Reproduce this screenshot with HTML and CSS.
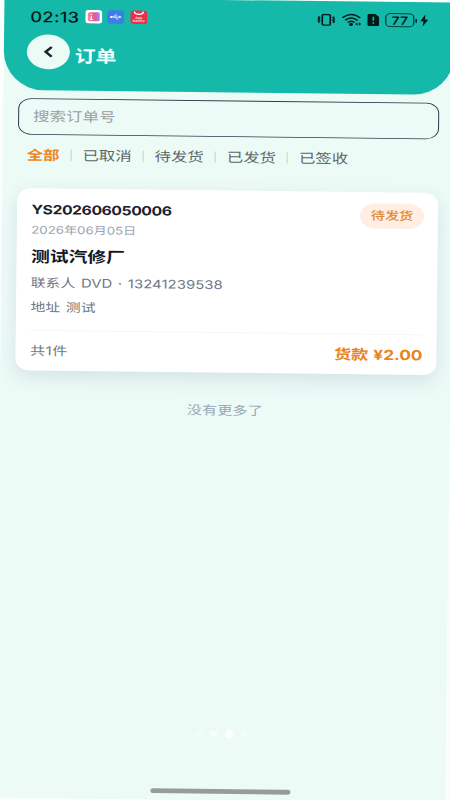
FILE: index.html
```html
<!DOCTYPE html>
<html lang="zh-CN">
<head>
<meta charset="utf-8">
<title>订单</title>
<link rel="stylesheet" href="styles.css">
</head>
<body>
<div class="screen">
  <header class="header">
    <div class="status">
      <span class="time">02:13</span>
      <div class="apps">
        <svg width="17" height="17" viewBox="0 0 17 17"><defs><linearGradient id="g"><stop offset="0" stop-color="#f58d9c"/><stop offset=".55" stop-color="#dd5c9c"/><stop offset="1" stop-color="#9a86ea"/></linearGradient></defs><rect width="17" height="17" rx="4" fill="#fff"/><rect x="2.500" y="3" width="12" height="11" rx="2" fill="url(#g)"/><path d="M6 5v1.500M6 8v4M4.800 12h2.600" stroke="#fff" stroke-width="1.200"/></svg>
        <svg width="17" height="17" viewBox="0 0 17 17"><rect width="17" height="17" rx="4" fill="#3c7de6"/><path d="M3.500 8.500H13M6 8.500l2-2.400h2M7.500 8.500l2 2.400h1.500" fill="none" stroke="#fff" stroke-width=".9"/><circle cx="4" cy="8.500" r="1.300" fill="#fff"/><path d="M12 7l2.400 1.500L12 10z" fill="#fff"/></svg>
        <svg width="17" height="17" viewBox="0 0 17 17"><rect width="17" height="17" rx="4" fill="#e7304b"/><path d="M4 1.500c.4 4.600 8.600 4.600 9 0" fill="none" stroke="#fff" stroke-width="1.500"/><text x="8.500" y="10.500" class="tiny">App</text><text x="8.500" y="14" class="tiny">Gallery</text></svg>
      </div>
      <div class="signals">
        <svg class="vibrate" width="18" height="16" viewBox="0 0 18 16"><rect x="5" y="1.500" width="8" height="13" rx="1.500" fill="none" stroke="#06191a" stroke-width="1.700"/><path d="M1 4l1.300 1.500L1 7l1.300 1.500L1 10l1.300 1.500M17 4l-1.300 1.500L17 7l-1.300 1.500L17 10l-1.300 1.500" fill="none" stroke="#06191a" stroke-width="1.700"/></svg>
        <svg class="wifi" width="21" height="17" viewBox="0 0 21 17"><path d="M1 6.300Q10 -2.300 19 6.300M3.800 9.300Q10 3.400 16.200 9.300M6.400 12Q10 8.700 13.200 12" fill="none" stroke="#06191a" stroke-width="1.800"/><circle cx="9.800" cy="14.300" r="1.900" fill="#06191a"/><path d="M16.300 11.800v4L14 13.800zM17.700 11.800v4l2.300-2z" fill="#06191a"/></svg>
        <svg class="sim" width="12" height="15" viewBox="0 0 12 15"><path d="M2 0h6l4 4v9a2 2 0 0 1-2 2H2a2 2 0 0 1-2-2V2a2 2 0 0 1 2-2z" fill="#06191a"/><path d="M6 3.500v5M6 10.300v1.900" stroke="#15b9aa" stroke-width="1.700"/></svg>
        <span class="battery">77</span>
        <svg class="nub" width="2" height="6" viewBox="0 0 2 6"><rect y="0.500" width="1.600" height="5" rx=".8" fill="#06191a"/></svg>
        <svg class="bolt" width="8" height="15" viewBox="0 0 8 15"><path d="M5 0L0 8.300h3.200L2.400 15 8 6.300H4.700z" fill="#06191a"/></svg>
      </div>
    </div>
    <div class="titlebar">
      <span class="back"><svg width="11" height="15" viewBox="0 0 11 15"><path d="M8.800 1.500L2.800 7.500l6 6" fill="none" stroke="#1c2630" stroke-width="2.800"/></svg></span>
      <h1 class="title">订单</h1>
    </div>
  </header>
  <div class="search">搜索订单号</div>
  <nav class="tabs">
    <span class="tab active">全部</span><i class="sep"></i><span class="tab">已取消</span><i class="sep"></i><span class="tab">待发货</span><i class="sep"></i><span class="tab">已发货</span><i class="sep"></i><span class="tab">已签收</span>
  </nav>
  <article class="card">
    <div class="card-head">
      <div>
        <div class="number">YS202606050006</div>
        <div class="date">2026年06月05日</div>
      </div>
      <span class="badge">待发货</span>
    </div>
    <div class="shop">测试汽修厂</div>
    <div class="info">联系人 DVD · 13241239538</div>
    <div class="info">地址 测试</div>
    <div class="card-foot"><span class="count">共1件</span><span class="price">货款 ¥2.00</span></div>
  </article>
  <p class="end">没有更多了</p>
  <div class="bottom">
    <div class="dots"><i class="dot faint"></i><i class="dot"></i><i class="dot current"></i><i class="dot faint"></i></div>
    <div class="home"></div>
  </div>
</div>
</body>
</html>
```

FILE: styles.css
```css
* { box-sizing: border-box; margin: 0; padding: 0; }
html { height: 800px; overflow: hidden; background: #fafffd; }
body { width: 450px; height: 800px; overflow: hidden; font-family: Inter, "Noto Sans CJK SC", sans-serif; }
.screen {
  width: 450px; height: 988px; display: flex; flex-direction: column;
  background: #edfbf7; transform-origin: 0 0;
  transform: matrix(1, .0115, -.0093, .81, 4.5, -2.5);
}
.header { height: 114px; flex: none; background: #15b9aa; border-radius: 0 0 40px 40px / 0 0 48px 48px; }
.status { height: 45px; padding-left: 26px; display: flex; align-items: center; color: #06191a; }
.time { width: 54.500px; font-size: 18.300px; line-height: 24px; font-weight: 550; letter-spacing: .3px; }
.apps { display: flex; gap: 5.500px; }
.apps svg { display: block; }
.tiny { font: 700 3.500px "Liberation Sans", sans-serif; fill: #fff; text-anchor: middle; }
.signals { display: flex; align-items: center; margin-left: 170.500px; }
.signals svg { flex: none; }
.wifi { margin-left: 6px; }
.sim { margin-left: 5px; }
.battery { width: 29px; height: 17px; margin-left: 6px; border: 1.200px solid #06191a; border-radius: 5px; text-align: center; font-size: 14px; line-height: 15px; font-weight: 600; }
.nub { margin-left: 1px; }
.bolt { margin-left: 3px; }
.titlebar { display: flex; align-items: flex-start; padding-left: 23px; }
.back { width: 43px; height: 43px; border-radius: 50%; background: #edfbf7; display: flex; align-items: center; justify-content: center; }
.title { margin: 12px 0 0 5px; font-size: 20.800px; line-height: 30px; font-weight: 600; color: #f4fffd; }
.search { flex: none; height: 45px; margin: 9.500px 14px 0 15px; border: 1.500px solid #30384a; border-radius: 13px; padding-left: 14px; font-size: 16.500px; line-height: 42px; color: #999e9d; }
.tabs { flex: none; height: 26px; margin-top: 12.500px; padding-left: 24px; display: flex; align-items: center; font-size: 16.400px; line-height: 26px; color: #606766; }
.active { color: #f08519; font-weight: 700; }
.sep { width: 1px; height: 14px; margin: 0 11px; background: #c8d1cf; }
.card { flex: none; height: 225px; margin: 28px 14.500px 0; padding: 0 13.500px 0 15px; border-radius: 14px; background: #fff; box-shadow: 0 8px 20px rgba(60, 80, 120, .14); }
.card-head { display: flex; justify-content: space-between; height: 65px; padding-top: 13px; }
.number { font-size: 15.700px; line-height: 28px; height: 26px; font-weight: 650; letter-spacing: -.4px; color: #1a2230; }
.date { font-size: 13.200px; line-height: 24px; color: #99a3b1; }
.badge { width: 64px; height: 31px; margin-top: 1px; border-radius: 16px; background: #ffeee1; color: #e28a30; font-size: 14.200px; line-height: 30px; font-weight: 500; text-align: center; }
.shop { height: 38px; font-size: 18.800px; line-height: 40px; font-weight: 700; color: #111827; }
.info { font-size: 14.800px; line-height: 29px; height: 30px; letter-spacing: .1px; word-spacing: 1.300px; color: #707782; }
.info + .info { height: 29px; }
.card-foot { height: 48px; margin-top: 13px; border-top: 1px solid #f3f4f6; display: flex; justify-content: space-between; align-items: center; }
.count { font-size: 15px; letter-spacing: .6px; color: #707782; }
.price { font-size: 17.200px; font-weight: 700; word-spacing: 1px; color: #e8831b; }
.end { margin-top: 33px; text-align: center; font-size: 15.200px; line-height: 28px; color: #9aa8b8; }
.bottom { margin-top: auto; height: 88px; display: flex; flex-direction: column; align-items: center; }
.dots { display: flex; align-items: center; gap: 8px; height: 11px; }
.dot { width: 7px; height: 8px; border-radius: 50%; background: #f6fffc; }
.faint { background: #f2fdf9; }
.current { width: 8px; height: 10px; background: #fff; }
.home { width: 140px; height: 6px; margin-top: 63px; border-radius: 3px; background: #969c9a; }
```
